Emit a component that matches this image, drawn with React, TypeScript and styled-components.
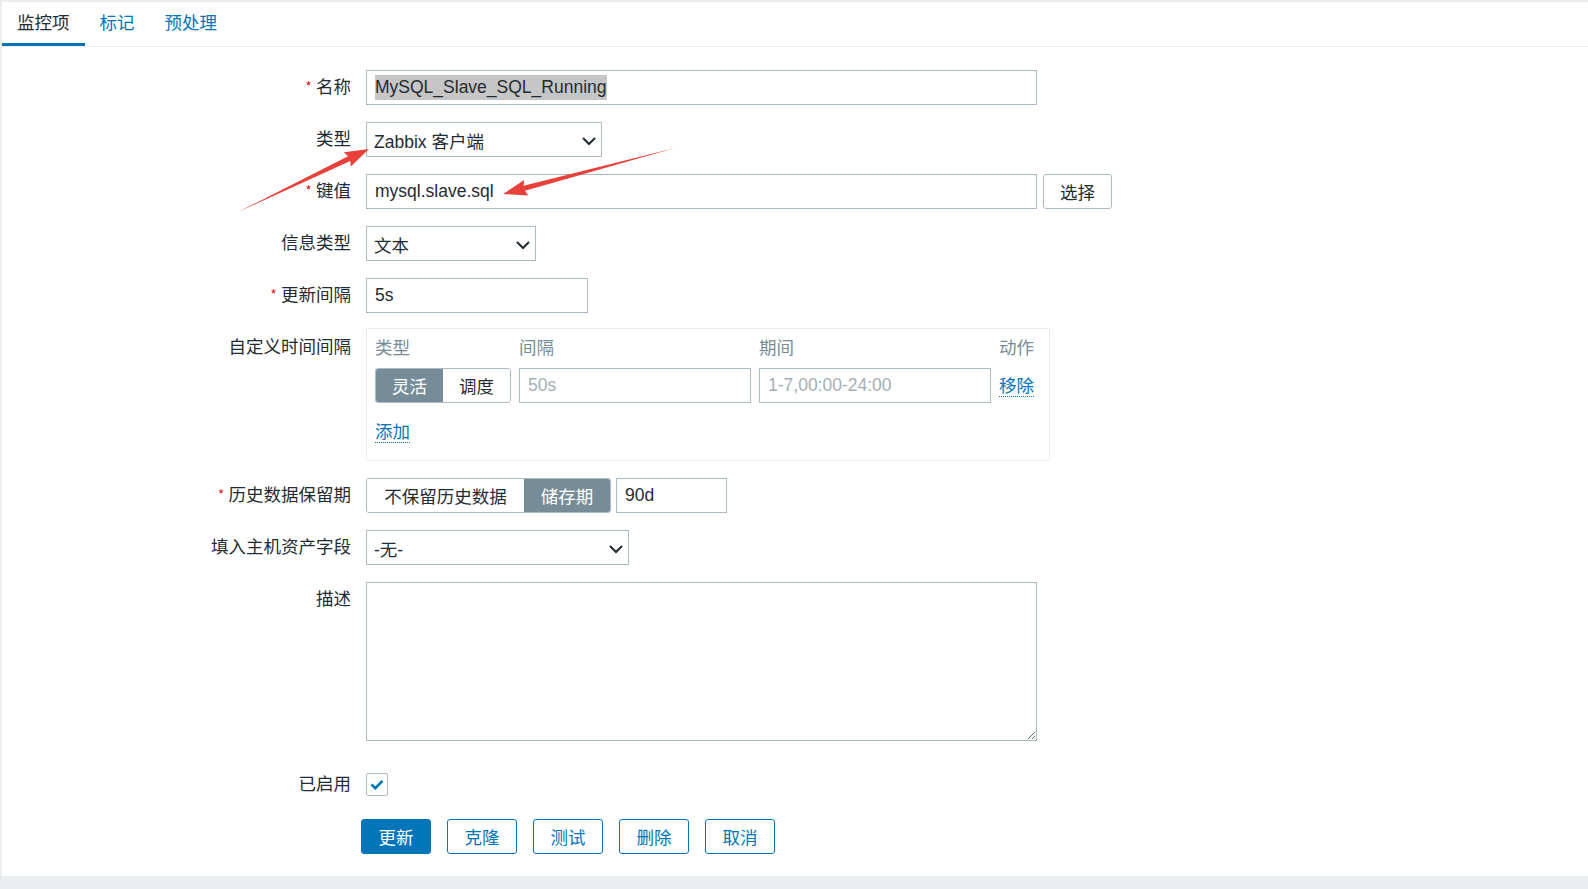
import * as React from 'react';
import styled, { createGlobalStyle } from 'styled-components';

const GlobalStyle = createGlobalStyle`
  html, body {
    margin: 0;
    padding: 0;
    background: #ebeef0;
  }
  * {
    box-sizing: border-box;
  }
  body {
    font-family: "Liberation Sans", Arial, "Noto Sans CJK SC", sans-serif;
    font-size: 17.5px;
    color: #1f2c33;
  }
`;

const Page = styled.div`
  position: relative;
  width: 1588px;
  height: 889px;
  padding: 2px 0 0 2px;
  overflow: hidden;
`;

const Panel = styled.div`
  background: #fff;
  height: 874px;
`;

const TabBar = styled.div`
  display: flex;
  height: 45px;
  border-bottom: 1px solid #ebeef0;
`;

const Tab = styled.div<{ $active?: boolean }>`
  padding: 0 15px;
  line-height: 42px;
  color: ${(p) => (p.$active ? '#1f2c33' : '#0275b8')};
  border-bottom: 3px solid ${(p) => (p.$active ? '#0275b8' : 'transparent')};
`;

const Form = styled.div`
  display: grid;
  grid-template-columns: 349px 1fr;
  column-gap: 15px;
  row-gap: 17px;
  padding-top: 23px;
`;

const Label = styled.div<{ $push?: number }>`
  text-align: right;
  height: 35px;
  line-height: 35px;
  white-space: nowrap;
  margin-top: ${(p) => p.$push || 0}px;
`;

const Req = styled.span`
  color: #d40000;
  font-size: 13px;
  line-height: 1;
  margin-right: 5px;
  vertical-align: 3px;
`;

const Cell = styled.div<{ $push?: number }>`
  display: flex;
  align-items: center;
  gap: 5px;
  min-height: 35px;
  margin-top: ${(p) => p.$push || 0}px;
`;

const TextBox = styled.div<{ $w: number }>`
  width: ${(p) => p.$w}px;
  height: 35px;
  border: 1px solid #acbbc2;
  padding: 0 8px;
  display: flex;
  align-items: center;
  white-space: nowrap;
  background: #fff;
`;

const Input = styled.input<{ $w: number }>`
  width: ${(p) => p.$w}px;
  height: 35px;
  border: 1px solid #acbbc2;
  padding: 0 8px;
  font: inherit;
  color: #1f2c33;
  outline: none;
  &::placeholder {
    color: #a3aeb4;
  }
`;

const Selected = styled.span`
  background: #c6c6c6;
  padding: 2px 0;
`;

const Select = styled.div<{ $w: number }>`
  width: ${(p) => p.$w}px;
  height: 35px;
  border: 1px solid #acbbc2;
  padding: 2px 4px 0 7px;
  display: flex;
  align-items: center;
  justify-content: space-between;
`;

const Chevron = () => (
  <svg width="16" height="10" viewBox="0 0 16 10">
    <path d="M2 2l6 6 6-6" fill="none" stroke="#1f2c33" strokeWidth="2" />
  </svg>
);

const PlainButton = styled.button`
  width: 69px;
  height: 35px;
  border: 1px solid #acbbc2;
  border-radius: 3px;
  background: #fff;
  font: inherit;
  color: #1f2c33;
  margin-left: 1px;
`;

const Segments = styled.div`
  display: flex;
  height: 35px;
  border: 1px solid #acbbc2;
  border-radius: 3px;
  overflow: hidden;
`;

const Segment = styled.div<{ $active?: boolean; $w: number }>`
  width: ${(p) => p.$w}px;
  display: flex;
  align-items: center;
  justify-content: center;
  background: ${(p) => (p.$active ? '#768d99' : '#fff')};
  color: ${(p) => (p.$active ? '#fff' : '#1f2c33')};
`;

const IntervalBox = styled.div`
  width: 684px;
  height: 133px;
  margin-top: -2px;
  border: 1px solid #ebeef0;
  padding: 4px 14px 0 8px;
`;

const IntervalGrid = styled.div`
  display: grid;
  grid-template-columns: 136px 232px 232px auto;
  column-gap: 8px;
  align-items: center;
`;

const Head = styled.div`
  color: #768d99;
  line-height: 30px;
  margin-bottom: 5px;
`;

const Link = styled.span`
  color: #0275b8;
  border-bottom: 1px dotted #0275b8;
  line-height: 22px;
`;

const AddRow = styled.div`
  margin-top: 18px;
`;

const TextArea = styled.textarea`
  width: 671px;
  height: 159px;
  border: 1px solid #acbbc2;
  font: inherit;
  outline: none;
`;

const Check = styled.div`
  width: 22px;
  height: 23px;
  border: 1px solid #acbbc2;
  border-radius: 2px;
  display: flex;
  align-items: center;
  justify-content: center;
`;

const Actions = styled.div`
  display: flex;
  gap: 16px;
  margin: 17px 0 0 359px;
`;

const ActionButton = styled.button<{ $primary?: boolean }>`
  width: 70px;
  height: 35px;
  border-radius: 3px;
  border: 1px solid #0275b8;
  background: ${(p) => (p.$primary ? '#0275b8' : '#fff')};
  color: ${(p) => (p.$primary ? '#fff' : '#0275b8')};
  font: inherit;
`;

const Overlay = styled.svg`
  position: absolute;
  left: 0;
  top: 0;
  pointer-events: none;
`;

// red annotation arrow: tapered shaft + head
const arrow = (x1: number, y1: number, x2: number, y2: number) => {
  const dx = x2 - x1;
  const dy = y2 - y1;
  const len = Math.hypot(dx, dy);
  const ux = dx / len;
  const uy = dy / len;
  const nx = -uy;
  const ny = ux;
  const hl = 22;
  const hw = 8;
  const bx = x2 - ux * hl;
  const by = y2 - uy * hl;
  const nb = 2.6;
  const pts = [
    [x1, y1],
    [bx + nx * nb, by + ny * nb],
    [bx + nx * hw - ux * 2, by + ny * hw - uy * 2],
    [x2, y2],
    [bx - nx * hw - ux * 2, by - ny * hw - uy * 2],
    [bx - nx * nb, by - ny * nb],
  ];
  return pts.map((p) => p.join(',')).join(' ');
};

export default function App() {
  return (
    <Page>
      <GlobalStyle />
      <Panel>
        <TabBar>
          <Tab $active>监控项</Tab>
          <Tab>标记</Tab>
          <Tab>预处理</Tab>
        </TabBar>
        <Form>
          <Label><Req>*</Req>名称</Label>
          <Cell>
            <TextBox $w={671}>
              <Selected>MySQL_Slave_SQL_Running</Selected>
            </TextBox>
          </Cell>

          <Label>类型</Label>
          <Cell>
            <Select $w={236}>
              <span>Zabbix 客户端</span>
              <Chevron />
            </Select>
          </Cell>

          <Label><Req>*</Req>键值</Label>
          <Cell>
            <Input $w={671} readOnly defaultValue="mysql.slave.sql" />
            <PlainButton>选择</PlainButton>
          </Cell>

          <Label>信息类型</Label>
          <Cell>
            <Select $w={170}>
              <span>文本</span>
              <Chevron />
            </Select>
          </Cell>

          <Label><Req>*</Req>更新间隔</Label>
          <Cell>
            <Input $w={222} readOnly defaultValue="5s" />
          </Cell>

          <Label>自定义时间间隔</Label>
          <Cell>
            <IntervalBox>
              <IntervalGrid>
                <Head>类型</Head>
                <Head>间隔</Head>
                <Head>期间</Head>
                <Head>动作</Head>
                <Segments>
                  <Segment $active $w={68}>灵活</Segment>
                  <Segment $w={68}>调度</Segment>
                </Segments>
                <Input $w={232} readOnly placeholder="50s" />
                <Input $w={232} readOnly placeholder="1-7,00:00-24:00" />
                <div><Link>移除</Link></div>
              </IntervalGrid>
              <AddRow><Link>添加</Link></AddRow>
            </IntervalBox>
          </Cell>

          <Label><Req>*</Req>历史数据保留期</Label>
          <Cell>
            <Segments>
              <Segment $w={157}>不保留历史数据</Segment>
              <Segment $active $w={86}>储存期</Segment>
            </Segments>
            <Input $w={111} readOnly defaultValue="90d" />
          </Cell>

          <Label>填入主机资产字段</Label>
          <Cell>
            <Select $w={263}>
              <span>-无-</span>
              <Chevron />
            </Select>
          </Cell>

          <Label>描述</Label>
          <Cell>
            <TextArea readOnly />
          </Cell>

          <Label $push={9}>已启用</Label>
          <Cell $push={9}>
            <Check>
              <svg width="14" height="11" viewBox="0 0 14 11">
                <path d="M1.5 5.5l3.8 3.6L12.5 1.8" fill="none" stroke="#0275b8" strokeWidth="2.6" />
              </svg>
            </Check>
          </Cell>
        </Form>
        <Actions>
          <ActionButton $primary>更新</ActionButton>
          <ActionButton>克隆</ActionButton>
          <ActionButton>测试</ActionButton>
          <ActionButton>删除</ActionButton>
          <ActionButton>取消</ActionButton>
        </Actions>
      </Panel>
      <Overlay width="1588" height="889">
        <polygon points={arrow(238, 212, 369, 149)} fill="#e8403a" />
        <polygon points={arrow(675, 148, 503, 194)} fill="#e8403a" />
      </Overlay>
    </Page>
  );
}
